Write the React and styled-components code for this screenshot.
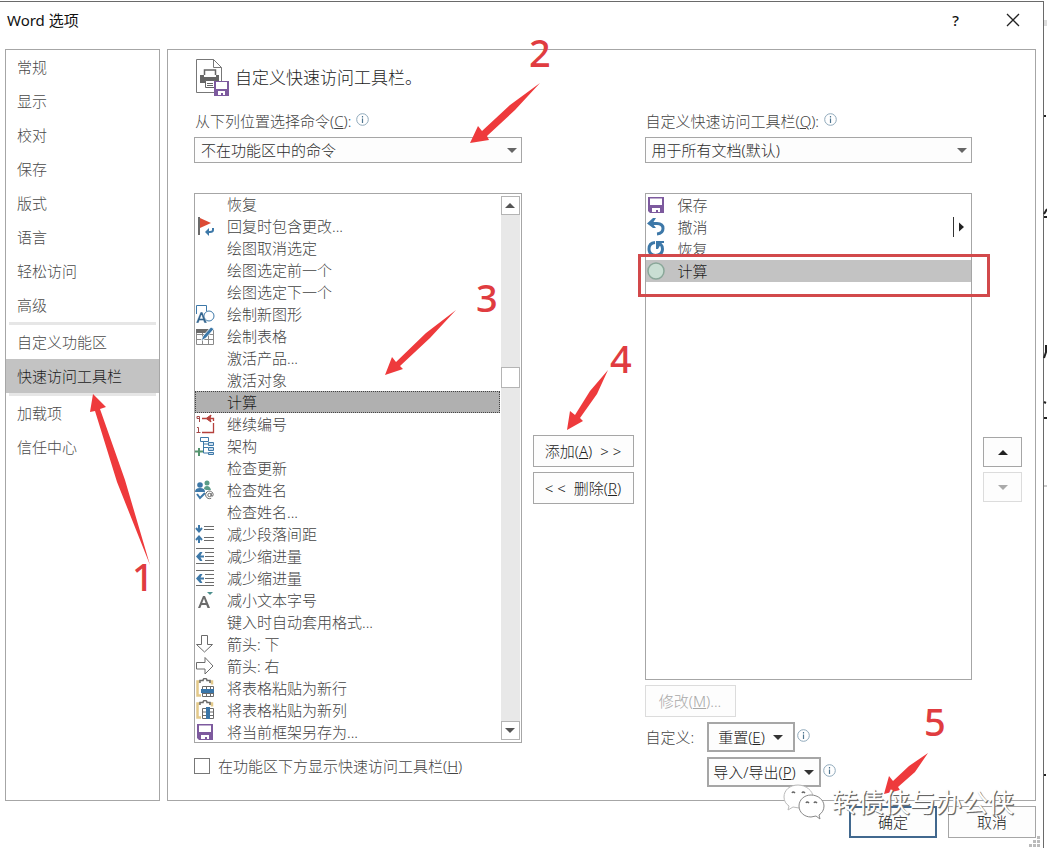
import React from "react";
import styled, { createGlobalStyle, css } from "styled-components";

const Global = createGlobalStyle`
  * { box-sizing: border-box; }
  body { margin: 0; background: #fff; }
  body, button, select, input {
    font-family: "Noto Sans", "Noto Sans CJK SC", sans-serif;
    font-size: 15px;
    font-weight: 300;
    line-height: 20px;
    color: #444;
  }
`;

const line = "#a6a6a6";

const Page = styled.div`
  position: relative;
  padding: 1px 3px 0 0;
  overflow: hidden;
`;
const Dialog = styled.main`
  border-top: 1px solid #6a6a6a;
  border-right: 1px solid #6a6a6a;
  padding: 0 7px 10px 5px;
`;
const TitleBar = styled.header`
  display: flex;
  align-items: center;
  height: 35px;
  margin-bottom: 12px;
`;
const Title = styled.h1`
  flex: 1;
  margin: 0 0 0 2px;
  font-size: 15px;
  font-weight: 400;
  line-height: 20px;
  color: #111;
`;
const TitleButton = styled.button`
  display: grid;
  place-items: center;
  width: 57px;
  height: 30px;
  padding: 0;
  border: 0;
  background: none;
  color: #111;
  font-weight: 500;
  &:last-child { margin-right: -5px; }
`;
const Body = styled.div`
  display: flex;
  gap: 7px;
`;
const Sidebar = styled.nav`
  flex: 0 0 155px;
  border: 1px solid ${line};
`;
const NavLink = styled.a`
  display: block;
  height: 34px;
  padding: 0 11px;
  line-height: 34px;
  text-decoration: none;
  color: ${(p) => (p.$active ? "#1c1c1c" : "#4a4a4a")};
  background: ${(p) => (p.$active ? "#c3c3c3" : "none")};
`;
const NavRule = styled.hr`
  height: 3px;
  margin: 0 3px;
  border: 0;
  background: #e6e6e6;
`;
const Panel = styled.section`
  flex: 1;
  min-width: 0;
  padding: 9px 13px 13px 26px;
  border: 1px solid ${line};
`;
const PanelHeader = styled.div`
  display: flex;
  align-items: center;
  gap: 5px;
  height: 38px;
  margin-bottom: 14px;
`;
const PanelTitle = styled.h2`
  margin: 0;
  font-size: 17px;
  font-weight: 300;
  line-height: 24px;
  color: #222;
`;
const Columns = styled.div`
  display: grid;
  grid-template-columns: minmax(0, 1fr) 101px minmax(0, 1fr) 39px;
  column-gap: 11px;
`;
const Column = styled.div`
  display: flex;
  flex-direction: column;
`;
const Stack = styled.div`
  display: flex;
  flex-direction: column;
  gap: 5px;
  padding-top: ${(p) => p.$top}px;
`;
const FieldLabel = styled.div`
  display: flex;
  align-items: center;
  height: 20px;
  margin-bottom: 6px;
  padding-left: 1px;
  gap: 5px;
`;
const Info = styled.svg`
  width: 13px;
  height: 13px;
  margin-bottom: 4px;
  flex: none;
`;
const SelectWrap = styled.div`
  display: grid;
  align-items: center;
  margin-bottom: 30px;
  & > * { grid-area: 1 / 1; }
  & > svg { justify-self: end; margin-right: 5px; pointer-events: none; }
`;
const Select = styled.select`
  appearance: none;
  width: 100%;
  height: 26px;
  padding: 0 24px 0 6px;
  border: 1px solid ${line};
  border-radius: 0;
  background: #fdfdfd;
  color: #2c2c2c;
`;
const CommandBox = styled.div`
  display: flex;
  height: 550px;
  box-shadow: inset 0 0 0 1px ${line};
  overflow: hidden;
`;
const List = styled.ul`
  flex: 1;
  min-width: 0;
  margin: 0;
  padding: 0 0 0 1px;
  list-style: none;
`;
const ToolbarList = styled(List)`
  flex: none;
  height: 487px;
  padding: 0;
  border: 1px solid ${line};
`;
const Row = styled.li`
  display: flex;
  align-items: center;
  height: 22px;
  gap: 12px;
  white-space: nowrap;
  ${(p) => p.$selected && css`
    color: #1c1c1c;
    background: ${p.$selected};
  `}
  ${(p) => p.$focus && css`outline: 1px dotted #444; outline-offset: -1px;`}
`;
const IconSlot = styled.span`
  flex: none;
  width: 20px;
  height: 20px;
  & > svg { display: block; }
`;
const Flyout = styled.svg`
  margin-left: auto;
  margin-right: 5px;
`;
const ScrollBar = styled.div`
  display: flex;
  flex-direction: column;
  width: 19px;
  margin: 3px 2px 3px 1px;
  background: #e8e8e8;
`;
const ScrollCap = styled.button`
  display: grid;
  place-items: center;
  height: ${(p) => p.$h || 19}px;
  padding: 0;
  border: 1px solid #b4b4b4;
  background: #fff;
`;
const Track = styled.div`
  flex: ${(p) => p.$part};
`;
const Button = styled.button`
  display: flex;
  align-items: center;
  justify-content: center;
  gap: 8px;
  height: ${(p) => p.$h || 32}px;
  min-width: ${(p) => p.$w || 0}px;
  padding: 0;
  white-space: pre;
  color: #222;
  background: #fdfdfd;
  border: ${(p) => (p.$thick ? 2 : 1)}px solid ${(p) => p.$line || line};
  &:disabled { color: #a8a8a8; border-color: #dcdcdc; }
`;
const CheckLine = styled.label`
  display: flex;
  align-items: center;
  gap: 8px;
  margin-top: 13px;
`;
const CheckBox = styled.input`
  appearance: none;
  width: 16px;
  height: 16px;
  margin: 0;
  border: 1px solid #777;
  background: #fff;
`;
const ModifyLine = styled.div`
  display: flex;
  margin: 5px 0;
`;
const Customize = styled.div`
  display: grid;
  grid-template-columns: 61px 1fr;
  row-gap: 5px;
  align-items: center;
  padding-left: 1px;
`;
const CustomizeCell = styled.div`
  grid-column: 2;
  display: flex;
  align-items: center;
  gap: 2px;
`;
const Footer = styled.footer`
  display: flex;
  justify-content: flex-end;
  gap: 11px;
  padding-top: 5px;
`;
const Overlay = styled.svg`
  position: absolute;
  left: 0;
  top: 0;
  pointer-events: none;
`;
const Digit = styled.span`
  position: absolute;
  left: ${(p) => p.$x}px;
  top: ${(p) => p.$y}px;
  font-family: "Noto Sans", sans-serif;
  font-size: 38px;
  font-weight: 500;
  line-height: 40px;
  color: #e03c40;
`;
const Highlight = styled.div`
  position: absolute;
  left: 638px;
  top: 254px;
  width: 352px;
  height: 43px;
  border: 3px solid #d2494b;
`;
const Watermark = styled.div`
  position: absolute;
  left: 783px;
  top: 783px;
  display: flex;
  align-items: center;
  gap: 6px;
  font-size: 26px;
  font-weight: 400;
  line-height: 38px;
  white-space: nowrap;
  color: #fff;
  text-shadow: 1px 1px 0 #666, 1px 1px 1px #777;
`;

const Arrow = ({ up, color = "#555" }) => (
  <svg width="10" height="5" viewBox="0 0 10 5" aria-hidden="true">
    <path d={up ? "M5 0L10 5H0z" : "M0 0h10L5 5z"} fill={color} />
  </svg>
);

const InfoIcon = () => (
  <Info viewBox="0 0 13 13" aria-hidden="true">
    <circle cx="6.500" cy="6.500" r="5.800" fill="#fff" stroke="#8fa9bb" />
    <path d="M6.500 5.500v4.500M6.500 3v1.400" stroke="#4f7690" strokeWidth="1.200" />
  </Info>
);

const blue = "#3d78a8";
const purple = "#7d5a9e";
const gray = "#6b6b6b";

const pasteBase = (
  <>
    <path d="M5 3.500H2.500v14H6M14 3.500h3v3" fill="none" stroke="#e3c98a" strokeWidth="2.500" />
    <path d="M5 5V2.500h3Q8 .5 10 .5t2 2h3V5" fill="none" stroke={gray} strokeWidth="1.500" />
    <path d="M6 7h11v12H6z" fill="#fff" />
  </>
);
const icons = {
  flag: (
    <>
      <path d="M4 1v18" stroke={gray} strokeWidth="2" />
      <path d="M5 2l11 5-11 5z" fill="#dc4b35" />
      <path d="M18 12v2q0 2-3 2h-2" fill="none" stroke={blue} strokeWidth="2" />
      <path d="M10 16l4-4v8z" fill={blue} />
    </>
  ),
  shapes: (
    <>
      <path d="M1.500 10V1.500h10V7" fill="none" stroke={blue} />
      <circle cx="14" cy="12" r="5" fill="#fff" stroke={blue} />
      <path d="M1 19L5.500 8h2L12 19H9.300l-1-2.500H4.500L3.600 19zM5.200 14.500h2.500L6.500 11z" fill="#33658f" stroke="#fff" strokeWidth=".4" />
    </>
  ),
  table: (
    <>
      <path d="M1.500 3.500h17v15h-17zM1 8.500h18M1 13.500h18M7.500 5v13M13.500 5v13" fill="none" stroke="#8a8a8a" />
      <path d="M1 3h12v4H1z" fill={gray} />
      <path d="M6 15l2-5 8-9 3 2-8 9z" fill={blue} stroke="#fff" strokeWidth=".8" />
    </>
  ),
  renumber: (
    <>
      <path d="M4.500 2.500H2v2h2.500zM4.500 4v4M2 13.500h1.500V18M1.500 18.500h4" fill="none" stroke="#a34747" />
      <path d="M7 4.500h4M7 18.500h11.500V9M12 4.500h6.500V7" fill="none" stroke="#b5413c" strokeWidth="1.300" />
      <path d="M11 4.500L16 1l-1 3.500L16 8z" fill="#b5413c" stroke="#b5413c" />
    </>
  ),
  tree: (
    <>
      <path d="M5.500 1.500h8v4h-8zM8.500 6v11H13M8.500 11.500H13M8.500 8H13" fill="none" stroke={blue} />
      <path d="M13.500 6.500h5v3h-5zM13.500 11.500h5v3h-5zM13.500 16.500h5v2h-5z" fill="#c9dced" stroke={blue} />
      <path d="M0 15.500h8M4 12v8" stroke="#54946f" strokeWidth="2" />
    </>
  ),
  people: (
    <>
      <circle cx="12" cy="3" r="2.500" fill="#5a9c88" />
      <path d="M9 9q0-3 3-3t4 4h-5z" fill="#5a9c88" />
      <circle cx="5" cy="5" r="2.800" fill={blue} />
      <path d="M0 12q0-4 5-4t5 4z" fill={blue} />
      <path d="M2 14l3 4 5-5" fill="none" stroke={blue} strokeWidth="2" />
      <circle cx="14.500" cy="15" r="1.700" fill="none" stroke={gray} />
      <path d="M16.200 13v3q2 1 2-1.500a3.800 3.800 0 1 0-2 3.700" fill="none" stroke={gray} />
    </>
  ),
  spacing: (
    <>
      <path d="M9 2.500h10M9 5.500h10M9 13.500h10M9 16.500h10" stroke={gray} />
      <path d="M4 1v5M4 19v-5" stroke={blue} strokeWidth="2" />
      <path d="M1 4l3 3.500L7 4M1 16l3-3.500L7 16" fill="none" stroke={blue} strokeWidth="2" />
    </>
  ),
  indent: (
    <>
      <path d="M1 2.500h18M1 17.500h18M10 6.500h9M10 10.500h9M10 14.500h9" stroke={gray} />
      <path d="M1 10.500L5 6h2.500L5.500 9.500H9v2H5.500L7.500 15H5z" fill={blue} />
    </>
  ),
  shrink: (
    <>
      <path d="M3 18L8 6h2l5 12h-2.500l-1.200-3H6.500l-1.200 3zM7.200 13h3.400L9 8.500z" fill={gray} />
      <path d="M12 2h6l-3 3z" fill="#4c8f8d" />
    </>
  ),
  down: <path d="M6.500 1.500h6v9h5l-8 7.500-8-7.500h5z" fill="#fff" stroke={gray} />,
  right: <path d="M1.500 6.500h8.500v-5l8 8.500-8 8v-5H1.500z" fill="#fff" stroke={gray} />,
  pasteRow: (
    <>
      {pasteBase}
      <path d="M7.500 8.500h11v10h-11zM7 15.500h12M11.500 8v11M15.500 8v11" fill="none" stroke={gray} />
      <path d="M6 11h13v4H6z" fill="#3975a8" />
    </>
  ),
  pasteCol: (
    <>
      {pasteBase}
      <path d="M7.500 8.500h11v10h-11zM7 12h12M7 15.500h12" fill="none" stroke={gray} />
      <path d="M11 7h4v12h-4z" fill="#3975a8" />
    </>
  ),
  save: (
    <>
      <path d="M2 2h16v16H4l-2-2z" fill={purple} />
      <path d="M4 3.500h12v6.500H4zM6 13h8v4h-2v-2h-2v2H6z" fill="#fff" />
    </>
  ),
  undo: (
    <>
      <path d="M4 6.500h7q6 0 6 5t-6 5.500" fill="none" stroke={blue} strokeWidth="3" />
      <path d="M1 6.500L7 1h3L6.500 6.500 10 11H7z" fill={blue} />
    </>
  ),
  redo: (
    <>
      <path d="M9 3.500Q3 4 3 10t6.500 6.500Q16.500 16 16.500 10q0-3-2-5" fill="none" stroke={blue} strokeWidth="3" />
      <path d="M10 2h8v2h-2.500L12 10h-2z" fill={blue} />
    </>
  ),
  circle: <circle cx="10" cy="10" r="8" fill="#c9ded3" stroke="#8aa799" strokeWidth="1.500" />,
};

const Icon = ({ name }) => (
  <IconSlot>
    {name && <svg width="20" height="20" viewBox="0 0 20 20" aria-hidden="true">{icons[name]}</svg>}
  </IconSlot>
);

const commands = [
  ["恢复"], ["回复时包含更改...", "flag"], ["绘图取消选定"], ["绘图选定前一个"], ["绘图选定下一个"],
  ["绘制新图形", "shapes"], ["绘制表格", "table"], ["激活产品..."], ["激活对象"], ["计算"],
  ["继续编号", "renumber"], ["架构", "tree"], ["检查更新"], ["检查姓名", "people"], ["检查姓名..."],
  ["减少段落间距", "spacing"], ["减少缩进量", "indent"], ["减少缩进量", "indent"], ["减小文本字号", "shrink"],
  ["键入时自动套用格式..."], ["箭头: 下", "down"], ["箭头: 右", "right"], ["将表格粘贴为新行", "pasteRow"],
  ["将表格粘贴为新列", "pasteCol"], ["将当前框架另存为...", "save"],
];
const toolbar = [["保存", "save"], ["撤消", "undo"], ["恢复", "redo"], ["计算", "circle"]];
const nav = [
  ["常规", "显示", "校对", "保存", "版式", "语言", "轻松访问", "高级"],
  ["自定义功能区", "快速访问工具栏"],
  ["加载项", "信任中心"],
];
const arrows = [
  "M93 394L106 407 100 409 125 480 150 565 117 482 95 411 90 412z",
  "M470 143L478 126 482 131 510 105 540 83 515 110 487 136 489 140z",
  "M385 375L392 357 396 362 426 333 456 310 430 338 400 366 403 369z",
  "M567 430L570 411 575 415 590 391 608 370 597 394 580 418 583 421z",
  "M884 794L889 776 893 781 909 766 928 753 915 772 898 787 900 790z",
];

export default function App() {
  return (
    <Page>
      <Global />
      <Dialog>
        <TitleBar>
          <Title>Word 选项</Title>
          <TitleButton aria-label="帮助">?</TitleButton>
          <TitleButton aria-label="关闭">
            <svg width="14" height="14" viewBox="0 0 14 14">
              <path d="M1 1l12 12M13 1L1 13" stroke="#222" strokeWidth="1.300" />
            </svg>
          </TitleButton>
        </TitleBar>
        <Body>
          <Sidebar>
            {nav.map((group, i) => (
              <React.Fragment key={i}>
                {i > 0 && <NavRule />}
                {group.map((item) => (
                  <NavLink key={item} href="#" $active={item === "快速访问工具栏"}>{item}</NavLink>
                ))}
              </React.Fragment>
            ))}
          </Sidebar>
          <Panel>
            <PanelHeader>
              <svg width="36" height="38" viewBox="0 0 36 38" aria-hidden="true">
                <path d="M2.500 .5h17l8 8v25h-25z" fill="#fff" stroke="#777" />
                <path d="M19.500 .5v8h8" fill="none" stroke="#777" />
                <path d="M10.500 16v-5h11v5" fill="#fff" stroke="#666" strokeWidth="1.500" />
                <path d="M6 16h4v2h12v-2h3v8H6z" fill="#666" />
                <path d="M11.500 21.500h9v7h-9zM13 24.500h6M13 26.500h6" fill="#fff" stroke="#666" />
                <path d="M20 22h15v15H20z" fill={purple} />
                <path d="M22 23h11v7H22zM24 32h7v4h-2v-2h-2v2h-3z" fill="#fff" />
              </svg>
              <PanelTitle>自定义快速访问工具栏。</PanelTitle>
            </PanelHeader>
            <Columns>
              <Column>
                <FieldLabel>
                  <label htmlFor="source">从下列位置选择命令(<u>C</u>):</label>
                  <InfoIcon />
                </FieldLabel>
                <SelectWrap>
                  <Select id="source"><option>不在功能区中的命令</option></Select>
                  <Arrow color="#666" />
                </SelectWrap>
                <CommandBox>
                  <List>
                    {commands.map(([text, icon], i) => (
                      <Row key={i} $selected={i === 9 && "#b0b0b0"} $focus={i === 9}>
                        <Icon name={icon} />{text}
                      </Row>
                    ))}
                  </List>
                  <ScrollBar>
                    <ScrollCap aria-label="向上"><Arrow up /></ScrollCap>
                    <Track $part={152} />
                    <ScrollCap $h={21} aria-label="滑块" />
                    <Track $part={333} />
                    <ScrollCap aria-label="向下"><Arrow /></ScrollCap>
                  </ScrollBar>
                </CommandBox>
                <CheckLine>
                  <CheckBox type="checkbox" />
                  <span>在功能区下方显示快速访问工具栏(<u>H</u>)</span>
                </CheckLine>
              </Column>
              <Stack $top={324}>
                <Button><span>添加(<u>A</u>)</span><span>&gt; &gt;</span></Button>
                <Button><span>&lt; &lt;</span><span>删除(<u>R</u>)</span></Button>
              </Stack>
              <Column>
                <FieldLabel>
                  <label htmlFor="target">自定义快速访问工具栏(<u>Q</u>):</label>
                  <InfoIcon />
                </FieldLabel>
                <SelectWrap>
                  <Select id="target"><option>用于所有文档(默认)</option></Select>
                  <Arrow color="#666" />
                </SelectWrap>
                <ToolbarList>
                  {toolbar.map(([text, icon], i) => (
                    <Row key={text} $selected={i === 3 && "#c3c3c3"}>
                      <Icon name={icon} />{text}
                      {i === 1 && (
                        <Flyout width="14" height="20" viewBox="0 0 14 20" aria-hidden="true">
                          <path d="M1.500 0v20" stroke="#333" />
                          <path d="M7 5.500v9l5-4.500z" fill="#222" />
                        </Flyout>
                      )}
                    </Row>
                  ))}
                </ToolbarList>
                <ModifyLine>
                  <Button disabled $w={91}><span>修改(<u>M</u>)...</span></Button>
                </ModifyLine>
                <Customize>
                  <span>自定义:</span>
                  <CustomizeCell>
                    <Button $thick $w={88} $h={30}><span>重置(<u>E</u>)</span><Arrow color="#333" /></Button>
                    <InfoIcon />
                  </CustomizeCell>
                  <CustomizeCell>
                    <Button $thick $w={114} $h={30}><span>导入/导出(<u>P</u>)</span><Arrow color="#333" /></Button>
                    <InfoIcon />
                  </CustomizeCell>
                </Customize>
              </Column>
              <Stack $top={326}>
                <Button $h={30} aria-label="上移"><Arrow up color="#222" /></Button>
                <Button $h={30} disabled aria-label="下移"><Arrow color="#aaa" /></Button>
              </Stack>
            </Columns>
          </Panel>
        </Body>
        <Footer>
          <Button $thick $w={88} $line="#41688e">确定</Button>
          <Button $w={88}>取消</Button>
        </Footer>
      </Dialog>
      <Highlight />
      <Overlay width="1047" height="848" viewBox="0 0 1047 848" aria-hidden="true">
        {arrows.map((d) => <path key={d} d={d} fill="#ee3a3c" />)}
        <path d="M1044 20h3v6h-3z" fill="#ddd" />
        <path d="M1044 116h2M1047 209l-3 5M1044 217h3M1046 345v7l-2 6M1044 402l2 1M1044 418h3M1044 775h2" fill="none" stroke="#222" strokeWidth="2" />
        <path d="M1044 486h3" stroke="#999" />
        <path d="M1037 836h3v3h-3zM1033 840h3v3h-3zM1037 840h3v3h-3zM1029 844h3v3h-3zM1033 844h3v3h-3zM1037 844h3v3h-3z" fill="#bbb" />
      </Overlay>
      <Digit $x={132} $y={556}>1</Digit>
      <Digit $x={529} $y={32}>2</Digit>
      <Digit $x={476} $y={277}>3</Digit>
      <Digit $x={610} $y={338}>4</Digit>
      <Digit $x={924} $y={701}>5</Digit>
      <Watermark>
        <svg width="43" height="38" viewBox="0 0 43 38" aria-hidden="true">
          <path d="M15 2C7 2 1 7 1 14c0 4 2 7 5 9l-1 4 5-3 6 1c8 0 14-5 14-11S23 2 15 2z" fill="#fff" stroke="#bbb" />
          <path d="M28 12c-7 0-12 5-12 11s5 11 12 11l5-1 4 3-1-4c3-2 5-5 5-9 0-6-6-11-13-11z" fill="#fff" stroke="#888" />
          <path d="M9 10q1-2 3 0M19 10q1-2 3 0M23 20q1-2 3 0M31 20q1-2 3 0" fill="none" stroke="#666" strokeWidth="1.500" />
        </svg>
        转债侠与办公侠
      </Watermark>
    </Page>
  );
}
